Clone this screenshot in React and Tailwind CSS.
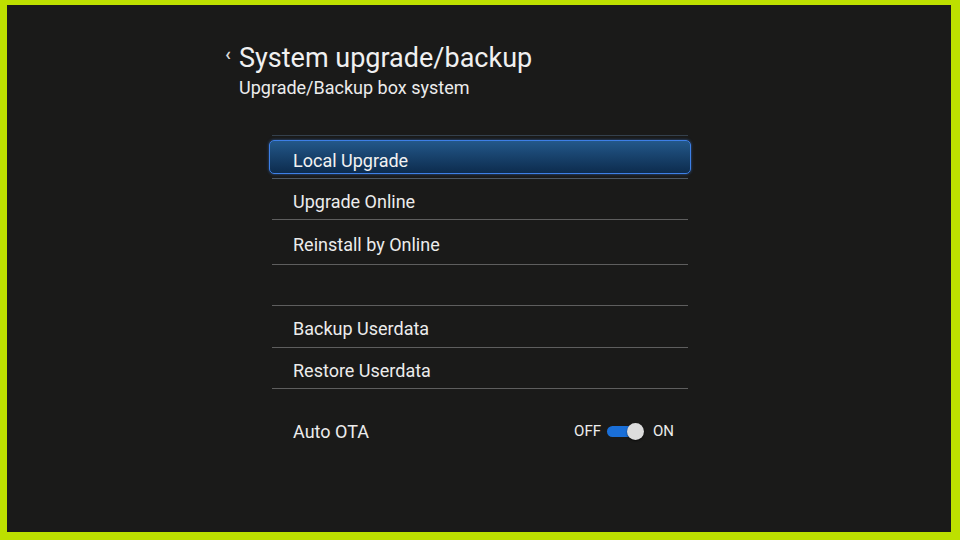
export default function App() {
  const font = { fontFamily: "Roboto, 'Noto Sans', sans-serif" };
  const Row = ({ h, children }) => (
    <div className={`flex items-center pl-[21px] pt-[4px] text-[18px] text-[#ececec]`} style={{ height: h }}>
      {children}
    </div>
  );
  const Line = () => <div className="h-px bg-[#5e5e5e]" />;
  return (
    <div className="w-[960px] h-[540px] bg-[#bde000] pt-[5px] pl-[7px] pr-[9px] pb-[8px]" style={font}>
      <div className="w-full h-full bg-[#1a1a19] flex flex-col">
        <div className="ml-[218px] mt-[38px] flex items-start">
          <span className="text-[#d8d8d8] text-[19px] font-bold leading-none mt-[1px] w-[14px]">‹</span>
          <div className="flex flex-col">
            <span className="text-[27px] leading-[30px] text-[#f0f0f0]">System upgrade/backup</span>
            <span className="text-[18px] leading-[20px] mt-[5px] text-[#ececec]">Upgrade/Backup box system</span>
          </div>
        </div>
        <div className="ml-[265px] w-[416px] mt-[37px] flex flex-col">
          <div className="h-px bg-[#34404c]" />
          <div className="-mx-[3px] mt-[4px] h-[34px] rounded-[5px] border border-[#3d7fe6] bg-gradient-to-b from-[#23588a] to-[#0d2c4e] flex items-center pl-[23px] pt-[6px] text-[18px] text-[#f2f2f2] shadow-[0_0_3px_rgba(60,130,230,0.6)]">
            Local Upgrade
          </div>
          <div className="h-px mt-[4px] bg-[#4d5864]" />
          <Row h={40}>Upgrade Online</Row>
          <Line />
          <Row h={44}>Reinstall by Online</Row>
          <Line />
          <Row h={40}></Row>
          <Line />
          <Row h={41}>Backup Userdata</Row>
          <Line />
          <Row h={40}>Restore Userdata</Row>
          <Line />
          <div className="h-[84px] flex items-center justify-between pl-[21px] pr-[14px] text-[#ececec]">
            <span className="text-[18px]">Auto OTA</span>
            <div className="flex items-center text-[15px]">
              <span>OFF</span>
              <div className="ml-[6px] mr-[8px] w-[38px] h-[16px] relative">
                <div className="absolute left-0 top-[3px] w-[34px] h-[11px] rounded-full bg-[#1a6fd8]" />
                <div className="absolute left-[20px] top-0 w-[17px] h-[17px] rounded-full bg-[#dcdcdc] shadow-[0_1px_2px_rgba(0,0,0,0.6)]" />
              </div>
              <span>ON</span>
            </div>
          </div>
        </div>
      </div>
    </div>
  );
}
